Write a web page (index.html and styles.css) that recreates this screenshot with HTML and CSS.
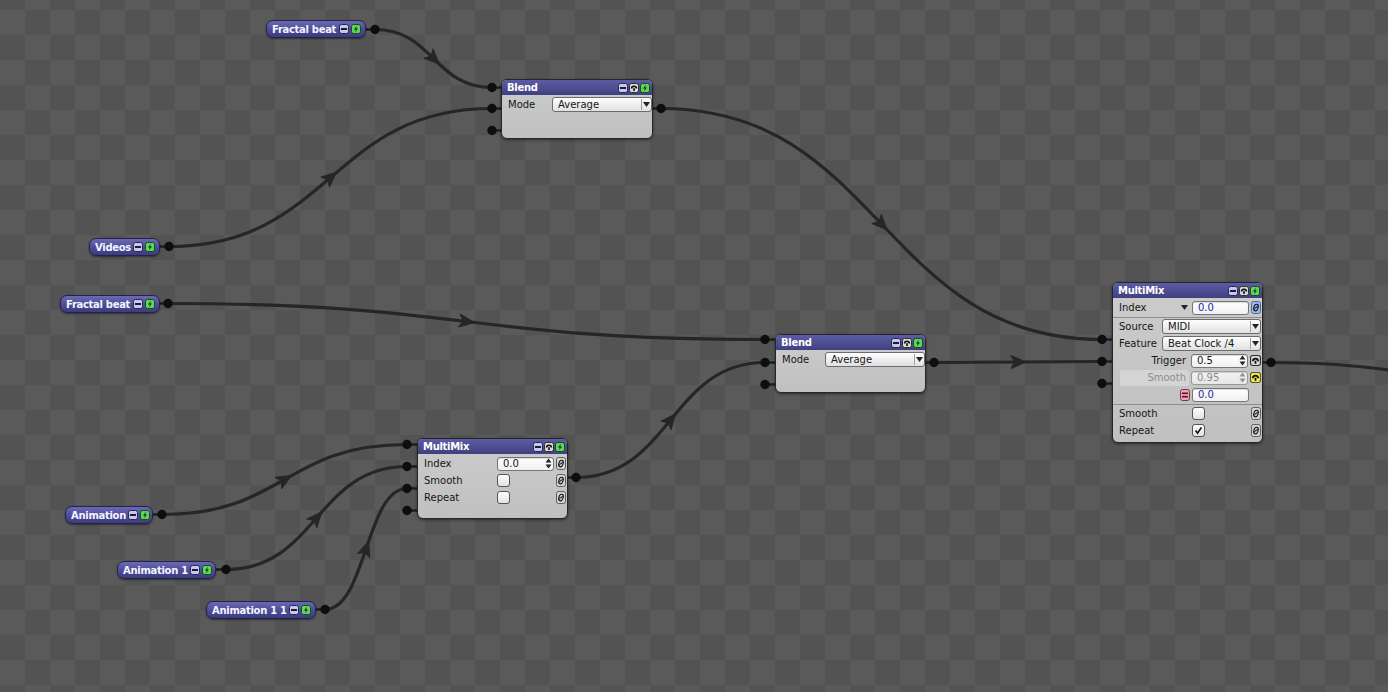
FILE: index.html
```html
<!DOCTYPE html>
<html lang="en">
<head>
  <meta charset="UTF-8">
  <title>Patch</title>
  <link rel="stylesheet" href="styles.css">
</head>
<body>
  <!-- shared button glyphs -->
  <svg class="defs" width="0" height="0">
    <symbol id="i-min" viewBox="0 0 10 10">
      <rect x=".5" y=".5" width="9" height="9" rx="2" fill="#c8c8ee" stroke="#26264e"/>
      <rect x="2" y="4" width="6" height="2" fill="#1c1c3a"/>
    </symbol>
    <symbol id="i-go" viewBox="0 0 10 10">
      <rect x=".5" y=".5" width="9" height="9" rx="2" fill="#5ed65e" stroke="#1a4a1a"/>
      <path d="M6.2 1.6L3 5.6H5L3.8 8.6L7 4.4H5Z" fill="#0c2a0c"/>
    </symbol>
    <symbol id="i-listen" viewBox="0 0 10 10">
      <rect x=".5" y=".5" width="9" height="9" rx="2" fill="#d8d8d8" stroke="#2e2e2e"/>
      <path d="M2.6 5.6A2.4 2.4 0 0 1 7.4 5.6" fill="none" stroke="#111" stroke-width="1.6"/>
      <rect x="4.2" y="5.2" width="1.6" height="2.8" fill="#111"/>
    </symbol>
    <symbol id="i-listen-on" viewBox="0 0 10 10">
      <rect x=".5" y=".5" width="9" height="9" rx="2" fill="#ecec5a" stroke="#5a5a18"/>
      <path d="M2.6 5.6A2.4 2.4 0 0 1 7.4 5.6" fill="none" stroke="#111" stroke-width="1.6"/>
      <rect x="4.2" y="5.2" width="1.6" height="2.8" fill="#111"/>
    </symbol>
    <symbol id="i-link" viewBox="0 0 10 13">
      <rect x=".5" y=".5" width="9" height="12" rx="2" fill="#d2d2d2" stroke="#5e5e5e"/>
      <ellipse cx="5" cy="6.5" rx="2.1" ry="3.4" transform="rotate(18 5 6.5)" fill="none" stroke="#111" stroke-width="1.1"/>
      <path d="M3.4 7.6L6.6 5.4" stroke="#111" stroke-width="1.1"/>
    </symbol>
    <symbol id="i-link-on" viewBox="0 0 10 13">
      <rect x=".5" y=".5" width="9" height="12" rx="2" fill="#9db6ec" stroke="#54689a"/>
      <ellipse cx="5" cy="6.5" rx="2.1" ry="3.4" transform="rotate(18 5 6.5)" fill="none" stroke="#111" stroke-width="1.1"/>
      <path d="M3.4 7.6L6.6 5.4" stroke="#111" stroke-width="1.1"/>
    </symbol>
    <symbol id="i-eq" viewBox="0 0 10 12">
      <rect x=".5" y=".5" width="9" height="11" rx="2" fill="#eaa4b8" stroke="#7a3448"/>
      <rect x="2" y="3.5" width="6" height="1.6" fill="#5a1428"/>
      <rect x="2" y="6.9" width="6" height="1.6" fill="#5a1428"/>
    </symbol>
    <symbol id="i-spin" viewBox="0 0 7 11">
      <path d="M.5 4.6L3.5 .6L6.5 4.6Z M.5 6.4L3.5 10.4L6.5 6.4Z" fill="#222"/>
    </symbol>
    <symbol id="i-down" viewBox="0 0 7 5">
      <path d="M0 0H7L3.5 5Z" fill="#222"/>
    </symbol>
    <symbol id="i-tick" viewBox="0 0 13 13">
      <path d="M3 6.6L5.4 9.6L10 2.8" fill="none" stroke="#111" stroke-width="2"/>
    </symbol>
  </svg>

  <div class="canvas">
    <svg class="wires" id="wires" width="1388" height="692"></svg>

    <div class="chip chip-fb1"><span class="chip-name">Fractal beat</span><svg class="hb"><use href="#i-min"/></svg><svg class="hb"><use href="#i-go"/></svg></div>
    <div class="chip chip-vid"><span class="chip-name">Videos</span><svg class="hb"><use href="#i-min"/></svg><svg class="hb"><use href="#i-go"/></svg></div>
    <div class="chip chip-fb2"><span class="chip-name">Fractal beat</span><svg class="hb"><use href="#i-min"/></svg><svg class="hb"><use href="#i-go"/></svg></div>
    <div class="chip chip-ani"><span class="chip-name">Animation</span><svg class="hb"><use href="#i-min"/></svg><svg class="hb"><use href="#i-go"/></svg></div>
    <div class="chip chip-an1"><span class="chip-name">Animation 1</span><svg class="hb"><use href="#i-min"/></svg><svg class="hb"><use href="#i-go"/></svg></div>
    <div class="chip chip-a11"><span class="chip-name">Animation 1 1</span><svg class="hb"><use href="#i-min"/></svg><svg class="hb"><use href="#i-go"/></svg></div>

    <div class="node node-blend1">
      <div class="node-head">
        <span class="node-title">Blend</span>
        <svg class="hb"><use href="#i-min"/></svg><svg class="hb"><use href="#i-listen"/></svg><svg class="hb"><use href="#i-go"/></svg>
      </div>
      <div class="node-body">
        <div class="row row-flush">
          <span class="lbl">Mode</span>
          <span class="select sel-mode"><span class="select-text">Average</span><span class="select-arrow"><svg class="down"><use href="#i-down"/></svg></span></span>
        </div>
      </div>
    </div>

    <div class="node node-blend2">
      <div class="node-head">
        <span class="node-title">Blend</span>
        <svg class="hb"><use href="#i-min"/></svg><svg class="hb"><use href="#i-listen"/></svg><svg class="hb"><use href="#i-go"/></svg>
      </div>
      <div class="node-body">
        <div class="row row-flush">
          <span class="lbl">Mode</span>
          <span class="select sel-mode"><span class="select-text">Average</span><span class="select-arrow"><svg class="down"><use href="#i-down"/></svg></span></span>
        </div>
      </div>
    </div>

    <div class="node node-mix1">
      <div class="node-head">
        <span class="node-title">MultiMix</span>
        <svg class="hb"><use href="#i-min"/></svg><svg class="hb"><use href="#i-listen"/></svg><svg class="hb"><use href="#i-go"/></svg>
      </div>
      <div class="node-body">
        <div class="row">
          <span class="lbl">Index</span>
          <span class="field"><span class="field-val">0.0</span><svg class="spin"><use href="#i-spin"/></svg></span>
          <svg class="lb"><use href="#i-link"/></svg>
        </div>
        <div class="row">
          <span class="lbl">Smooth</span>
          <span class="slot"><span class="check"></span></span>
          <svg class="lb"><use href="#i-link"/></svg>
        </div>
        <div class="row">
          <span class="lbl">Repeat</span>
          <span class="slot"><span class="check"></span></span>
          <svg class="lb"><use href="#i-link"/></svg>
        </div>
      </div>
    </div>

    <div class="node node-mix2">
      <div class="node-head">
        <span class="node-title">MultiMix</span>
        <svg class="hb"><use href="#i-min"/></svg><svg class="hb"><use href="#i-listen"/></svg><svg class="hb"><use href="#i-go"/></svg>
      </div>
      <div class="node-body">
        <div class="row">
          <span class="lbl">Index</span>
          <svg class="drop-mark"><use href="#i-down"/></svg>
          <span class="field"><span class="field-val val-blue">0.0</span></span>
          <svg class="lb"><use href="#i-link-on"/></svg>
        </div>
        <div class="divider"></div>
        <div class="row">
          <span class="lbl">Source</span>
          <span class="select sel-wide"><span class="select-text">MIDI</span><span class="select-arrow"><svg class="down"><use href="#i-down"/></svg></span></span>
        </div>
        <div class="row">
          <span class="lbl">Feature</span>
          <span class="select sel-wide"><span class="select-text">Beat Clock /4</span><span class="select-arrow"><svg class="down"><use href="#i-down"/></svg></span></span>
        </div>
        <div class="row">
          <span class="lbl lbl-r">Trigger</span>
          <span class="field"><span class="field-val">0.5</span><svg class="spin"><use href="#i-spin"/></svg></span>
          <svg class="hb hb-row"><use href="#i-listen"/></svg>
        </div>
        <div class="row">
          <span class="lbl lbl-r lbl-off">Smooth</span>
          <span class="field field-dim"><span class="field-val">0.95</span><svg class="spin spin-dim"><use href="#i-spin"/></svg></span>
          <svg class="hb hb-row"><use href="#i-listen-on"/></svg>
        </div>
        <div class="row">
          <span class="lbl"></span>
          <svg class="eb"><use href="#i-eq"/></svg>
          <span class="field"><span class="field-val val-blue">0.0</span></span>
          <span class="gap-btn"></span>
        </div>
        <div class="divider"></div>
        <div class="row">
          <span class="lbl">Smooth</span>
          <span class="slot"><span class="check"></span></span>
          <svg class="lb"><use href="#i-link"/></svg>
        </div>
        <div class="row">
          <span class="lbl">Repeat</span>
          <span class="slot"><span class="check"><svg class="tick"><use href="#i-tick"/></svg></span></span>
          <svg class="lb"><use href="#i-link"/></svg>
        </div>
      </div>
    </div>
  </div>

  <script>
    // port centres (x, y) and the node edge the stub runs to
    const ports = {
      fb1: [375, 29.5, 366], vid: [169, 246.5, 160], fb2: [168, 303.5, 160],
      ani: [162, 514.5, 153], an1: [226, 569.5, 216], a11: [325, 609.5, 316],
      b1i0: [492, 87.5, 501], b1i1: [492, 108.5, 501], b1i2: [492, 130.5, 501], b1o: [661, 108.5, 652],
      b2i0: [765, 339.5, 775], b2i1: [765, 362.5, 775], b2i2: [765, 384.5, 775], b2o: [934, 362.5, 925],
      m1i0: [407, 444.5, 417], m1i1: [407, 466.5, 417], m1i2: [407, 488.5, 417], m1i3: [407, 510.5, 417], m1o: [576, 477.5, 567],
      m2i0: [1102, 339.5, 1112], m2i1: [1102, 361.5, 1112], m2i2: [1102, 383.5, 1112], m2o: [1271, 362.5, 1262]
    };
    const links = [
      ['fb1', 'b1i0'], ['vid', 'b1i1'], ['b1o', 'm2i0'], ['fb2', 'b2i0'],
      ['b2o', 'm2i1'], ['m1o', 'b2i1'], ['ani', 'm1i0'], ['an1', 'm1i1'],
      ['a11', 'm1i2'], ['m2o', [1700, 420]]
    ];

    const NS = 'http://www.w3.org/2000/svg';
    const svg = document.getElementById('wires');

    function el(name, attrs) {
      const e = document.createElementNS(NS, name);
      for (const k in attrs) e.setAttribute(k, attrs[k]);
      svg.appendChild(e);
      return e;
    }

    links.forEach(([from, to]) => {
      const a = ports[from];
      const b = typeof to === 'string' ? ports[to] : to;
      const k = Math.abs(b[0] - a[0]) / 2;
      const wire = el('path', {
        d: `M${a[0]} ${a[1]} C${a[0] + k} ${a[1]} ${b[0] - k} ${b[1]} ${b[0]} ${b[1]}`,
        class: 'wire'
      });
      const len = wire.getTotalLength();
      const p = wire.getPointAtLength(len / 2);
      const q = wire.getPointAtLength(len / 2 + 1);
      const ang = Math.atan2(q.y - p.y, q.x - p.x) * 180 / Math.PI;
      el('path', {
        d: 'M8 0L-7 -6.5L-3.5 0L-7 6.5Z',
        class: 'arrow',
        transform: `translate(${p.x} ${p.y}) rotate(${ang})`
      });
    });

    Object.values(ports).forEach(([x, y, edge]) => {
      el('line', { x1: x, y1: y, x2: edge, y2: y, class: 'stub' });
      el('circle', { cx: x, cy: y, r: 4.7, class: 'dot' });
    });
  </script>
</body>
</html>
```

FILE: styles.css
```css
body {
  margin: 0;
  background: #575757;
  font-family: "DejaVu Sans", Verdana, sans-serif;
  font-size: 10px;
  overflow: hidden;
}
.defs {
  position: absolute;
  width: 0;
  height: 0;
}
.canvas {
  position: relative;
  width: 1388px;
  height: 692px;
  overflow: hidden;
  background: repeating-conic-gradient(#535353 0 25%, #5a5a5a 0 50%) 0 10px / 50px 50px;
}
.wires {
  position: absolute;
  left: 0;
  top: 0;
}
.wire {
  fill: none;
  stroke: #262626;
  stroke-width: 3.2;
}
.arrow {
  fill: #262626;
  stroke: #262626;
  stroke-width: 1;
  stroke-linejoin: round;
}
.stub {
  stroke: #1e1e1e;
  stroke-width: 2.5;
}
.dot {
  fill: #0e0e0e;
}

/* source chips */
.chip {
  position: absolute;
  box-sizing: border-box;
  height: 18px;
  display: flex;
  align-items: center;
  gap: 2px;
  padding: 0 4px 0 5px;
  border: 1px solid #23234a;
  border-radius: 7px;
  background: linear-gradient(#6a6ab4, #4c4c96 55%, #3b3b7e);
  box-shadow: 0 1px 2px rgba(0, 0, 0, 0.45);
  color: #f4f4ff;
  font-weight: bold;
  letter-spacing: -0.3px;
}
.chip-name {
  flex: 1;
  white-space: nowrap;
}
.chip-fb1 { left: 266px; top: 20px; width: 100px; }
.chip-vid { left: 89px; top: 238px; width: 71px; }
.chip-fb2 { left: 60px; top: 295px; width: 100px; }
.chip-ani { left: 65px; top: 506px; width: 88px; }
.chip-an1 { left: 117px; top: 561px; width: 99px; }
.chip-a11 { left: 206px; top: 601px; width: 110px; }

.hb {
  width: 10px;
  height: 10px;
  flex: none;
}
.hb-row {
  width: 11px;
  height: 11px;
}
.lb {
  width: 10px;
  height: 13px;
  flex: none;
}
.eb {
  width: 10px;
  height: 12px;
  flex: none;
}

/* nodes */
.node {
  position: absolute;
  box-sizing: border-box;
  width: 151px;
  border: 1px solid #262626;
  border-radius: 6px;
  background: linear-gradient(#cccccc, #c0c0c0);
  box-shadow: 0 1px 3px rgba(0, 0, 0, 0.5);
  overflow: hidden;
  color: #161616;
}
.node-blend1 { left: 501px; top: 79px; width: 152px; height: 60px; }
.node-blend2 { left: 775px; top: 334px; height: 59px; }
.node-mix1 { left: 417px; top: 438px; height: 81px; }
.node-mix2 { left: 1112px; top: 282px; height: 161px; }

.node-head {
  height: 15px;
  display: flex;
  align-items: center;
  gap: 1px;
  padding: 0 2px 0 5px;
  background: linear-gradient(#5c5ca6, #40407f);
  color: #fff;
  font-weight: bold;
  letter-spacing: -0.3px;
}
.node-title {
  flex: 1;
}
.node-body {
  padding: 1px 0 2px;
}
.row {
  height: 17px;
  display: flex;
  align-items: center;
  gap: 2px;
  padding: 0 1px 0 6px;
}
.row-flush {
  padding-right: 0;
}
.lbl {
  flex: 1;
  white-space: nowrap;
}
.lbl-r {
  text-align: right;
  padding-right: 3px;
}
.lbl-off {
  height: 16px;
  line-height: 16px;
  margin-left: 1px;
  background: #d4d4d4;
  border-radius: 2px;
  color: #8c8c8c;
}
.divider {
  margin-top: 1px;
  border-top: 1px solid #8e8e8e;
}

.field {
  box-sizing: border-box;
  width: 57px;
  height: 14px;
  flex: none;
  display: flex;
  align-items: center;
  padding: 0 1px 0 5px;
  border: 1px solid #767676;
  border-radius: 3px;
  background: linear-gradient(#ffffff, #f0f0f0);
  box-shadow: inset 0 1px 1px rgba(0, 0, 0, 0.15);
}
.field-val {
  flex: 1;
}
.val-blue {
  color: #2525a6;
}
.field-dim {
  color: #8a8a8a;
  background: linear-gradient(#f2f2f2, #e6e6e6);
  border-color: #9a9a9a;
}
.spin {
  width: 7px;
  height: 11px;
}
.spin-dim {
  opacity: 0.45;
}
.drop-mark {
  width: 7px;
  height: 5px;
  margin-right: 2px;
}
.gap-btn {
  width: 10px;
  flex: none;
}

.select {
  box-sizing: border-box;
  height: 15px;
  flex: none;
  display: flex;
  align-items: center;
  border: 1px solid #6c6c6c;
  border-radius: 3px;
  background: linear-gradient(#ffffff, #e0e0e0);
}
.sel-mode { width: 100px; }
.sel-wide { width: 99px; }
.select-text {
  flex: 1;
  padding-left: 5px;
  white-space: nowrap;
}
.select-arrow {
  width: 9px;
  height: 11px;
  display: flex;
  align-items: center;
  justify-content: center;
  border-left: 1px solid #a0a0a0;
}
.down {
  width: 7px;
  height: 5px;
}

.slot {
  width: 57px;
  flex: none;
  display: flex;
}
.check {
  box-sizing: border-box;
  width: 13px;
  height: 13px;
  display: flex;
  border: 1px solid #555;
  border-radius: 3px;
  background: linear-gradient(#fdfdfd, #e2e2e2);
}
.tick {
  width: 11px;
  height: 11px;
}
```
